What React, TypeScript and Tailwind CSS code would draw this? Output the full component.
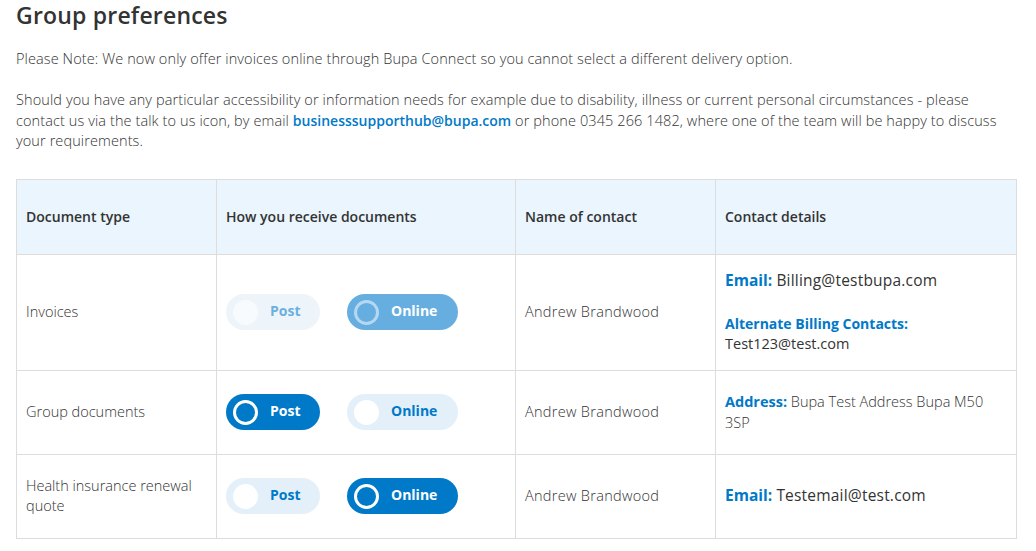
import React from 'react';

type Choice = 'post' | 'online';

interface PillProps {
  label: string;
  active: boolean;
  disabled?: boolean;
  wide?: boolean;
}

function Pill({ label, active, disabled, wide }: PillProps) {
  let box = '';
  let dot = '';
  let text = '';
  if (disabled && active) {
    box = 'bg-[#66aee0]';
    dot = 'border-[3px] border-[#b5d8f1] bg-transparent';
    text = 'text-white';
  } else if (disabled) {
    box = 'bg-[#eef5fa]';
    dot = 'bg-[#f8fbfe]';
    text = 'text-[#6cb0e0]';
  } else if (active) {
    box = 'bg-[#0079c8]';
    dot = 'border-[3px] border-white bg-transparent';
    text = 'text-white';
  } else {
    box = 'bg-[#e3f0fa]';
    dot = 'bg-white';
    text = 'text-[#0079c8]';
  }
  return (
    <div className={`flex items-center h-9 rounded-full pl-[7px] ${wide ? 'w-[111px]' : 'w-[94px]'} ${box}`}>
      <span className={`w-[25px] h-[25px] rounded-full shrink-0 ${dot}`} />
      <span className={`ml-[12px] text-[14px] font-bold leading-[20px] -mt-[2px] ${text}`}>{label}</span>
    </div>
  );
}

function Toggle({ value, disabled }: { value: Choice; disabled?: boolean }) {
  return (
    <div className="flex items-center gap-[27px]">
      <Pill label="Post" active={value === 'post'} disabled={disabled} />
      <Pill label="Online" active={value === 'online'} disabled={disabled} wide />
    </div>
  );
}

const cell = 'border border-[#dddddd] px-[9px] align-middle';

export default function App() {
  return (
    <div className="bg-white w-[1036px] h-[551px] overflow-hidden text-[#333333]" style={{ fontFamily: '"Open Sans", "Liberation Sans", sans-serif' }}>
      <div className="pl-4 pr-4">
        <h1 className="text-[23px] font-semibold leading-[30px] tracking-[0.2px] text-[#333333]">Group preferences</h1>
        <div className="mt-[19px] text-[14.5px] leading-[20.5px] font-light tracking-[0.1px]">
          <p>Please Note: We now only offer invoices online through Bupa Connect so you cannot select a different delivery option.</p>
          <p className="mt-[20.5px] pr-0">
            Should you have any particular accessibility or information needs for example due to disability, illness or current personal circumstances - please contact us via the talk to us icon, by email{' '}
            <a className="font-semibold text-[14px] text-[#0079c8] tracking-normal">businesssupporthub@bupa.com</a> or phone 0345 266 1482, where one of the team will be happy to discuss your requirements.
          </p>
        </div>

        <table className="mt-[27px] w-[1001px] border-collapse text-[14.5px]">
          <thead>
            <tr className="bg-[#eaf5fd] h-[75px] text-[14px]">
              <th className={`${cell} w-[200px] text-left font-semibold`}>Document type</th>
              <th className={`${cell} w-[299px] text-left font-semibold`}>How you receive documents</th>
              <th className={`${cell} w-[200px] text-left font-semibold`}>Name of contact</th>
              <th className={`${cell} text-left font-semibold`}>Contact details</th>
            </tr>
          </thead>
          <tbody className="font-light">
            <tr className="h-[116px]">
              <td className={cell}>Invoices</td>
              <td className={cell}><Toggle value="online" disabled /></td>
              <td className={`${cell} tracking-[0.3px]`}>Andrew Brandwood</td>
              <td className={cell}>
                <div className="leading-[20px] text-[15.5px] font-normal tracking-[0.2px]">
                  <span className="font-bold text-[#0079c8] tracking-normal">Email:</span> Billing@testbupa.com
                </div>
                <div className="mt-[24px] leading-[20px] text-[14px] font-bold text-[#0079c8]">Alternate Billing Contacts:</div>
                <div className="leading-[20px] font-normal">Test123@test.com</div>
              </td>
            </tr>
            <tr className="h-[84px]">
              <td className={cell}>Group documents</td>
              <td className={cell}><Toggle value="post" /></td>
              <td className={`${cell} tracking-[0.3px]`}>Andrew Brandwood</td>
              <td className={`${cell} leading-[21px] pr-[30px]`}>
                <span className="font-bold text-[#0079c8]">Address:</span> Bupa Test Address Bupa M50 3SP
              </td>
            </tr>
            <tr className="h-[84px]">
              <td className={`${cell} leading-[20px] pr-[20px]`}>Health insurance renewal quote</td>
              <td className={cell}><Toggle value="online" /></td>
              <td className={`${cell} tracking-[0.3px]`}>Andrew Brandwood</td>
              <td className={`${cell} text-[15.5px] font-normal tracking-[0.2px]`}>
                <span className="font-bold text-[#0079c8] tracking-normal">Email:</span> Testemail@test.com
              </td>
            </tr>
          </tbody>
        </table>
      </div>
    </div>
  );
}
